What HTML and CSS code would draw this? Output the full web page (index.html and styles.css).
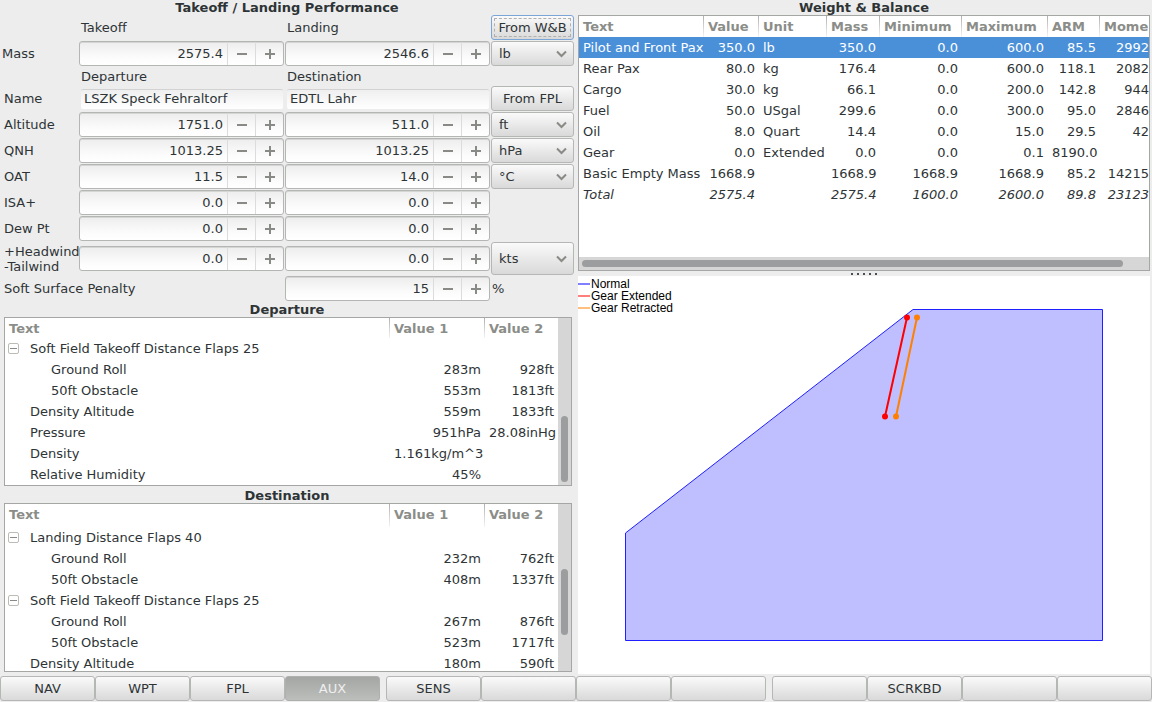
FILE: index.html
```html
<!DOCTYPE html>
<html lang="en">
<head>
<meta charset="utf-8">
<title>Takeoff / Landing Performance</title>
<link rel="stylesheet" href="styles.css">
</head>
<body>
<main class="main">
  <section class="left">
    <h2 class="title">Takeoff / Landing Performance</h2>
    <form class="form" id="form"></form>
    <h2 class="title">Departure</h2>
    <div class="tree-box" id="departure"></div>
    <h2 class="title">Destination</h2>
    <div class="tree-box" id="destination"></div>
  </section>
  <section class="right">
    <h2 class="title">Weight &amp; Balance</h2>
    <div class="wb-box">
      <div class="wb-view">
        <table class="wb">
          <colgroup><col class="w-text"><col class="w-value"><col class="w-unit"><col class="w-mass"><col class="w-min"><col class="w-max"><col class="w-arm"><col></colgroup>
          <thead><tr><th>Text</th><th>Value</th><th>Unit</th><th>Mass</th><th>Minimum</th><th>Maximum</th><th>ARM</th><th>Mome</th></tr></thead>
          <tbody>
            <tr class="selected"><td>Pilot and Front Pax</td><td>350.0</td><td>lb</td><td>350.0</td><td>0.0</td><td>600.0</td><td>85.5</td><td>2992</td></tr>
            <tr><td>Rear Pax</td><td>80.0</td><td>kg</td><td>176.4</td><td>0.0</td><td>600.0</td><td>118.1</td><td>2082</td></tr>
            <tr><td>Cargo</td><td>30.0</td><td>kg</td><td>66.1</td><td>0.0</td><td>200.0</td><td>142.8</td><td>944</td></tr>
            <tr><td>Fuel</td><td>50.0</td><td>USgal</td><td>299.6</td><td>0.0</td><td>300.0</td><td>95.0</td><td>2846</td></tr>
            <tr><td>Oil</td><td>8.0</td><td>Quart</td><td>14.4</td><td>0.0</td><td>15.0</td><td>29.5</td><td>42</td></tr>
            <tr><td>Gear</td><td>0.0</td><td>Extended</td><td>0.0</td><td>0.0</td><td>0.1</td><td>8190.0</td><td></td></tr>
            <tr><td>Basic Empty Mass</td><td>1668.9</td><td></td><td>1668.9</td><td>1668.9</td><td>1668.9</td><td>85.2</td><td>14215</td></tr>
            <tr class="total"><td>Total</td><td>2575.4</td><td></td><td>2575.4</td><td>1600.0</td><td>2600.0</td><td>89.8</td><td>23123</td></tr>
          </tbody>
        </table>
      </div>
      <div class="hscroll"><div class="hthumb"></div></div>
    </div>
    <div class="handle"><i></i><i></i><i></i><i></i><i></i></div>
    <div class="chart">
      <svg viewBox="0 0 572 398" preserveAspectRatio="xMinYMin meet">
        <polygon points="47.5,257 335,33.5 524.5,33.5 524.5,364.5 47.5,364.5" fill="#bfbfff" stroke="#2020ff" stroke-width="1"/>
        <g stroke="#f00" fill="#f00" stroke-width="2"><path d="M329 41.500L307 140.500"/><circle cx="329" cy="41.500" r="2"/><circle cx="307" cy="140.500" r="2"/></g>
        <g stroke="#ff8000" fill="#ff8000" stroke-width="2"><path d="M339 41.500L318 140.500"/><circle cx="339" cy="41.500" r="2"/><circle cx="318" cy="140.500" r="2"/></g>
        <g stroke-width="2"><path d="M0 8H12" stroke="#7f7fff"/><path d="M0 20H12" stroke="#ff7f7f"/><path d="M0 32H12" stroke="#ffbf7f"/></g>
        <g class="legend"><text x="13" y="12">Normal</text><text x="13" y="24">Gear Extended</text><text x="13" y="36">Gear Retracted</text></g>
      </svg>
    </div>
  </section>
</main>
<nav class="keys">
  <div class="group"><button>NAV</button><button>WPT</button><button>FPL</button><button class="active">AUX</button></div>
  <div class="group"><button>SENS</button><button></button><button></button><button></button></div>
  <div class="group"><button></button><button>SCRKBD</button><button></button><button></button></div>
</nav>
<script src="app.js"></script>
</body>
</html>
```

FILE: styles.css
```css
* { box-sizing: border-box; }
body {
  margin: 0;
  min-height: 100vh;
  display: flex;
  flex-direction: column;
  background: #ededed;
  color: #2e3436;
  font: 13px/15px "DejaVu Sans", sans-serif;
}
button, input, select { font: inherit; color: inherit; margin: 0; }
.main {
  flex: 1;
  display: grid;
  grid-template-columns: minmax(0, 574fr) minmax(0, 572fr);
  column-gap: 4px;
  padding-right: 2px;
}
.left, .right { display: flex; flex-direction: column; min-width: 0; }
.left { padding-bottom: 2px; }
.title { margin: 0; font-size: 13px; line-height: 15px; font-weight: bold; text-align: center; }

.form {
  display: grid;
  grid-template-columns: 79px minmax(0, 1fr) minmax(0, 1fr) 83px;
  grid-template-rows: 26px 26px 19px repeat(6, 26px) 34px 26px;
  align-items: center;
}
.form label, .form .caption, .form .percent { padding-bottom: 1px; white-space: nowrap; }
.form label { padding-left: 4px; }
.form label.mass { padding-left: 2px; }
.form .caption { padding-left: 2px; }
.form .wide { grid-column: span 2; }
.form .percent { padding-left: 1px; }
.spin {
  display: flex;
  height: 25px;
  margin: 0 1px 1px 0;
  border: 1px solid #b4b6b4;
  border-radius: 3px;
  background: linear-gradient(#ededed, #fcfcfc 70%, #fff);
  box-shadow: inset 0 1px #d5d5d5;
}
.spin input {
  flex: 1;
  min-width: 0;
  padding: 0 4px;
  border: 0;
  background: none;
  text-align: right;
}
.spin button {
  width: 28px;
  padding: 0;
  border: 0;
  border-left: 1px solid #dcdcdc;
  background: none;
  display: flex;
  align-items: center;
  justify-content: center;
}
.spin svg { display: block; width: 10px; height: 10px; fill: #888a85; }
.name {
  width: calc(100% - 4px);
  height: 20px;
  margin: 0 2px;
  padding: 0 3px 2px;
  border: 0;
  border-top: 1px solid #d2d2d2;
  border-radius: 2px;
  background: linear-gradient(#efefef, #fff);
}
.push, .combo select, .keys button {
  border: 1px solid #b5b7b5;
  border-radius: 3px;
  background: linear-gradient(#fafafa, #d9d9d9);
}
.push { height: 25px; width: 83px; margin-bottom: 1px; padding: 0; white-space: nowrap; }
.push.focused { border-color: #7aa5d6; outline: 1px dashed #b0b0b0; outline-offset: -4px; }
.combo { position: relative; align-self: stretch; padding-bottom: 1px; }
.combo select {
  appearance: none;
  display: block;
  width: 100%;
  height: 100%;
  padding: 0 7px;
}
.combo svg {
  position: absolute;
  right: 7px;
  top: calc(50% - 4px);
  width: 11px;
  height: 8px;
  fill: none;
  stroke: #888a85;
  stroke-width: 2;
}

.tree-box {
  flex: 1 1 169px;
  display: flex;
  margin: 0 2px 0 4px;
  border: 1px solid #a5a7a5;
  background: #fff;
  overflow: hidden;
}
#departure { margin-bottom: 2px; }
.tree-view { flex: 1; height: 167px; overflow: hidden; }
table { width: 100%; table-layout: fixed; border-collapse: collapse; }
th { text-align: left; color: #8b8d88; font-weight: bold; }
th, td { height: 21px; padding: 0 4px; white-space: nowrap; line-height: 21px; }
th:not(:last-child) {
  background: linear-gradient(#b0b0b0, #f4f4f4) right / 1px 100% no-repeat;
}
td { text-align: right; }
td:first-child { text-align: left; }
.tree th { height: 20px; padding-top: 1px; line-height: 19px; vertical-align: top; }
.tree.scrolled th { height: 23px; }
.tree .c1 { width: 95px; }
.tree .c2 { width: 73px; }
.tree td:first-child { padding-left: 25px; }
.tree td.child:first-child { padding-left: 46px; }
.tree td.parent:first-child { padding-left: 3px; }
.row-head { display: flex; align-items: center; gap: 11px; }
.expander {
  width: 11px;
  height: 11px;
  padding: 0;
  border: 1px solid #babdb6;
  border-radius: 2px;
  background: #fff;
  display: flex;
  align-items: center;
  justify-content: center;
}
.expander::before { content: ""; width: 7px; height: 1px; background: #888a85; }
.vscroll { width: 13px; padding: 0 3px; background: #d6d6d6; }
.vthumb { width: 7px; height: 66px; border-radius: 4px; background: #9b9d9e; margin-top: 98px; }
#destination .vthumb { margin-top: 65px; }

.wb-box {
  height: 256px;
  display: flex;
  flex-direction: column;
  border: 1px solid #a5a7a5;
  background: #fff;
}
.wb-view { flex: 1; overflow: hidden; }
.w-text { width: 125px; }
.w-value { width: 55px; }
.w-unit { width: 68px; }
.w-mass { width: 53px; }
.w-min { width: 82px; }
.w-max { width: 86px; }
.w-arm { width: 52px; }
.wb td:nth-child(3) { text-align: left; }
.wb td:last-child, .wb th:last-child { padding-right: 0; }
.selected { background: #4a90d9; color: #fff; }
.total { font-style: italic; }
.hscroll { height: 13px; padding: 3px; background: #d6d6d6; }
.hthumb { width: 96%; height: 7px; border-radius: 4px; background: #9b9d9e; }
.handle { height: 5px; display: flex; justify-content: center; align-items: center; gap: 4px; }
.handle i { width: 2px; height: 2px; background: #4a4e50; }
.chart { flex: 1; background: #fff; }
.chart svg { display: block; width: 100%; }
.legend { font: 12px "Liberation Sans", sans-serif; fill: #000; }

.keys { display: flex; gap: 6px; padding: 2px 0 1px; }
.group { flex: 1; display: flex; }
.keys button { flex: 1 1 0; min-width: 0; height: 25px; padding: 0; }
.keys .active {
  background: linear-gradient(#a3a6a3, #bcbebc);
  border-color: #aeb0ae;
  color: #eee;
}
```

FILE: app.js
```js
const minus = '<svg viewBox="0 0 10 10"><path d="M0 4H10V6H0Z"/></svg>';
const plus = '<svg viewBox="0 0 10 10"><path d="M0 4H4V0H6V4H10V6H6V10H4V6H0Z"/></svg>';
const chevron = '<svg viewBox="0 0 11 8"><path d="M1 1.500L5.500 6L10 1.500"/></svg>';

const spin = (id, value, label) =>
  `<div class="spin"><input id="${id}" type="text" value="${value}" aria-label="${label}">` +
  `<button type="button" aria-label="Decrease">${minus}</button>` +
  `<button type="button" aria-label="Increase">${plus}</button></div>`;
const combo = (unit, label) =>
  `<div class="combo"><select aria-label="${label} unit"><option>${unit}</option></select>${chevron}</div>`;
const row = (id, label, a, b, unit) =>
  `<label for="${id}-a" class="${id}">${label}</label>` +
  spin(id + '-a', a, label) + spin(id + '-b', b, label) +
  (unit ? combo(unit, label) : '<span></span>');

document.getElementById('form').innerHTML =
  '<span></span><span class="caption">Takeoff</span><span class="caption">Landing</span>' +
  '<button type="button" class="push focused">From W&amp;B</button>' +
  row('mass', 'Mass', '2575.4', '2546.6', 'lb') +
  '<span></span><span class="caption">Departure</span><span class="caption">Destination</span><span></span>' +
  '<label for="name-a">Name</label><input class="name" id="name-a" type="text" value="LSZK Speck Fehraltorf">' +
  '<input class="name" aria-label="Destination name" type="text" value="EDTL Lahr">' +
  '<button type="button" class="push">From FPL</button>' +
  row('altitude', 'Altitude', '1751.0', '511.0', 'ft') +
  row('qnh', 'QNH', '1013.25', '1013.25', 'hPa') +
  row('oat', 'OAT', '11.5', '14.0', '°C') +
  row('isa', 'ISA+', '0.0', '0.0') +
  row('dew', 'Dew Pt', '0.0', '0.0') +
  row('wind', '+Headwind<br>-Tailwind', '0.0', '0.0', 'kts').replaceAll('"+Headwind<br>-Tailwind', '"Wind') +
  '<label for="soft" class="wide">Soft Surface Penalty</label>' + spin('soft', '15', 'Penalty') +
  '<span class="percent">%</span>';

const tree = (id, rows, scrolled) => {
  const body = rows.map(([kind, text, a = '', b = '']) => {
    const head = kind === 'parent'
      ? `<div class="row-head"><button class="expander" type="button" aria-label="Collapse"></button>${text}</div>`
      : text;
    return `<tr><td class="${kind}">${head}</td><td>${a}</td><td>${b}</td></tr>`;
  }).join('');
  document.getElementById(id).innerHTML =
    `<div class="tree-view"><table class="tree ${scrolled ? 'scrolled' : ''}">` +
    '<colgroup><col><col class="c1"><col class="c2"></colgroup>' +
    '<thead><tr><th>Text</th><th>Value 1</th><th>Value 2</th></tr></thead>' +
    `<tbody>${body}</tbody></table></div><div class="vscroll"><div class="vthumb"></div></div>`;
};

tree('departure', [
  ['parent', 'Soft Field Takeoff Distance Flaps 25'],
  ['child', 'Ground Roll', '283m', '928ft'],
  ['child', '50ft Obstacle', '553m', '1813ft'],
  ['item', 'Density Altitude', '559m', '1833ft'],
  ['item', 'Pressure', '951hPa', '28.08inHg'],
  ['item', 'Density', '1.161kg/m^3'],
  ['item', 'Relative Humidity', '45%']
]);
tree('destination', [
  ['parent', 'Landing Distance Flaps 40'],
  ['child', 'Ground Roll', '232m', '762ft'],
  ['child', '50ft Obstacle', '408m', '1337ft'],
  ['parent', 'Soft Field Takeoff Distance Flaps 25'],
  ['child', 'Ground Roll', '267m', '876ft'],
  ['child', '50ft Obstacle', '523m', '1717ft'],
  ['item', 'Density Altitude', '180m', '590ft']
], true);
```
